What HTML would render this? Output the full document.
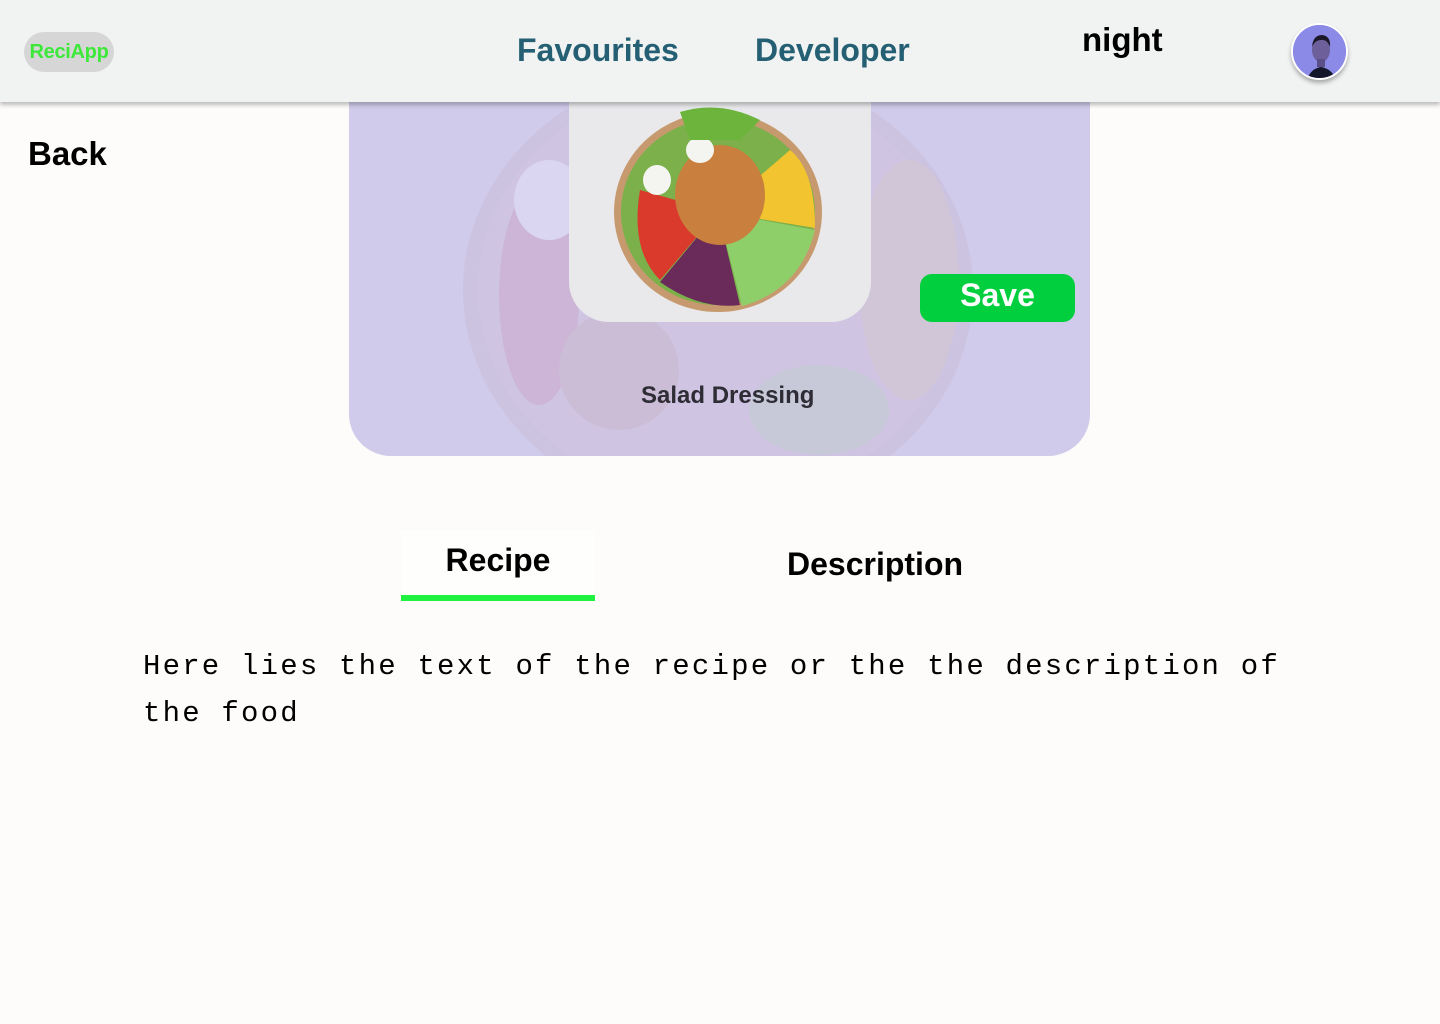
<!DOCTYPE html>
<html><head><meta charset="utf-8"><style>
*{margin:0;padding:0;box-sizing:border-box}
body{width:1440px;height:1024px;background:#fdfcfa;font-family:"Liberation Sans",Arial,sans-serif;position:relative;overflow:hidden}
.hdr{position:absolute;left:0;top:0;width:1440px;height:102px;background:#f1f3f2;box-shadow:0 3px 4px rgba(0,0,0,.25);z-index:5}
.logo{position:absolute;left:24px;top:32px;width:90px;height:40px;border-radius:20px;background:#d6d6d6;color:#3de83a;font-size:20px;font-weight:bold;line-height:40px;text-align:center;letter-spacing:-0.3px}
.nav{position:absolute;top:32px;font-size:32px;font-weight:bold;color:#245f73}
.night{position:absolute;left:1082px;top:21px;font-size:33px;font-weight:bold;color:#000}
.av{position:absolute;left:1291px;top:23px;width:57px;height:57px;border-radius:50%;border:2px solid #fff;box-shadow:0 3px 4px rgba(0,0,0,.3);overflow:hidden;background:#8d8ee4}
.back{position:absolute;left:28px;top:135px;font-size:33px;font-weight:bold;color:#000}
.card{position:absolute;left:349px;top:80px;width:741px;height:376px;border-radius:0 0 42px 42px;background:#d0cbea;overflow:hidden}
.img{position:absolute;left:569px;top:90px;width:302px;height:232px;border-radius:0 0 40px 40px;background:#e9e9ec;overflow:hidden}
.save{position:absolute;left:920px;top:274px;width:155px;height:48px;border-radius:12px;background:#02cf3e;color:#fff;font-size:32px;font-weight:bold;text-align:center;line-height:42px}
.title{position:absolute;left:641px;top:382px;font-size:24px;font-weight:bold;color:#2e2c35}
.tab1{position:absolute;left:401px;top:530px;width:194px;height:71px;border-bottom:6px solid #1ff340;background:#fefefd;text-align:center;font-size:32px;font-weight:bold;padding-top:12px}
.tab2{position:absolute;left:787px;top:546px;font-size:32px;font-weight:bold}
.txt{position:absolute;left:143px;top:643px;width:1200px;font-family:"Liberation Mono",monospace;font-size:29px;letter-spacing:2.2px;line-height:47px;color:#000}
</style></head><body>
<div class="hdr">
 <div class="logo">ReciApp</div>
 <div class="nav" style="left:517px">Favourites</div>
 <div class="nav" style="left:755px">Developer</div>
 <div class="night">night</div>
 <div class="av"><svg width="57" height="57" viewBox="0 0 57 57"><rect width="57" height="57" fill="#8b8ae6"/><path d="M14 57 Q16 44 28 42 Q40 44 44 57Z" fill="#141629"/><ellipse cx="28" cy="25" rx="9" ry="12" fill="#6c5f9a"/><path d="M19 22 Q20 10 29 10 Q38 11 37 22 Q34 14 28 15 Q22 15 19 22Z" fill="#1c1828"/><rect x="24" y="34" width="8" height="8" fill="#5a4f88"/></svg></div>
</div>
<div class="back">Back</div>
<div class="card">
 <svg width="741" height="376" style="position:absolute;left:0;top:0">
  <ellipse cx="369" cy="210" rx="255" ry="225" fill="#cbbfdc" opacity=".7"/>
  <ellipse cx="369" cy="210" rx="240" ry="212" fill="#cfc6e2" opacity=".8"/>
  <ellipse cx="190" cy="215" rx="40" ry="110" fill="#ccb5d6"/>
  <ellipse cx="270" cy="290" rx="60" ry="60" fill="#cbbdd6"/>
  <ellipse cx="560" cy="200" rx="50" ry="120" fill="#d1c6d8"/>
  <ellipse cx="470" cy="330" rx="70" ry="45" fill="#c7c9d8"/>
  <ellipse cx="200" cy="120" rx="35" ry="40" fill="#dad6f2"/>
 </svg>
</div>
<div class="img">
 <svg width="302" height="232" viewBox="569 90 302 232" style="position:absolute;left:0;top:0">
  <ellipse cx="718" cy="212" rx="104" ry="100" fill="#c69a6e"/>
  <ellipse cx="718" cy="212" rx="97" ry="93" fill="#7bb04a"/>
  <path d="M718 212 L640 190 Q630 250 660 280Z" fill="#d93a2c"/>
  <path d="M718 212 L660 282 Q700 310 740 305Z" fill="#6a2a5a"/>
  <path d="M718 212 L742 306 Q800 290 815 230Z" fill="#8fcf6a"/>
  <path d="M718 212 L815 228 Q815 170 790 150Z" fill="#f2c430"/>
  <ellipse cx="720" cy="195" rx="45" ry="50" fill="#c9803e"/>
  <ellipse cx="700" cy="150" rx="14" ry="13" fill="#f4f4f0"/>
  <ellipse cx="657" cy="180" rx="14" ry="15" fill="#f4f4f0"/>
  <path d="M680 112 Q720 100 760 120 L740 140 L690 140Z" fill="#6cb43c"/>
 </svg>
</div>
<div class="save">Save</div>
<div class="title">Salad Dressing</div>
<div class="tab1">Recipe</div>
<div class="tab2">Description</div>
<div class="txt">Here lies the text of the recipe or the the description of the food</div>
</body></html>
